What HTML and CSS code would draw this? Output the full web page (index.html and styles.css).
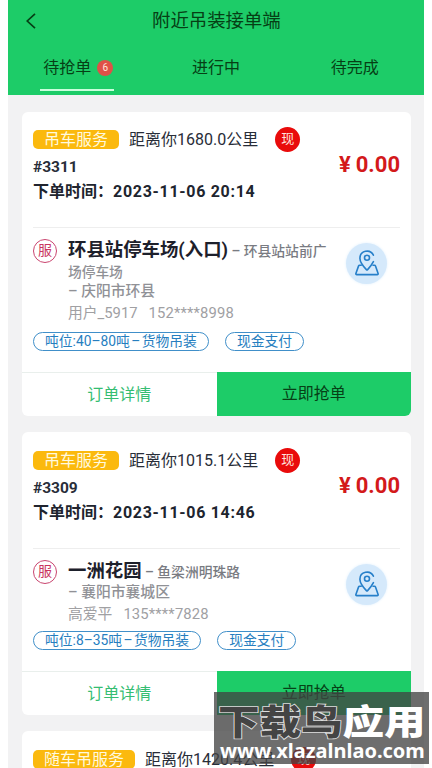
FILE: index.html
```html
<!DOCTYPE html>
<html lang="zh-CN">
<head>
<meta charset="utf-8">
<title>附近吊装接单端</title>
<link rel="stylesheet" href="styles.css">
</head>
<body>
<svg class="defs" aria-hidden="true">
  <symbol id="pin" viewBox="0 0 24 26">
    <path d="M18.4 11.6Q16.5 15.4 12.6 19.6 12 20.2 11.4 19.6C8 16 4.9 12 4.9 8.2A7.1 7.1 0 0 1 18.4 5.2"/>
    <circle cx="12" cy="7.8" r="2.5"/>
    <path d="M6.2 15.3H4.6Q3.8 15.3 3.5 16.1L.9 23.4Q.6 24.6 1.8 24.6H22.2Q23.4 24.6 23.1 23.4L20.5 16.1Q20.2 15.3 19.4 15.3H18"/>
  </symbol>
</svg>
<main class="phone">
  <header class="header">
    <div class="titlebar">
      <svg class="back" viewBox="0 0 10 16"><path d="M9 .8 1.2 8 9 15.2"/></svg>
      <h1>附近吊装接单端</h1>
    </div>
    <nav class="tabs">
      <div class="tab active"><span>待抢单</span><b class="count">6</b></div>
      <div class="tab">进行中</div>
      <div class="tab">待完成</div>
    </nav>
  </header>

  <section class="list">
    <article class="card">
      <div class="top">
        <div class="info">
          <div class="service"><span class="tag">吊车服务</span><span>距离你1680.0公里</span><i class="cash">现</i></div>
          <div class="number">#3311</div>
          <div class="time"><span>下单时间：</span><span class="date">2023-11-06 20:14</span></div>
        </div>
        <div class="price"><span class="yen">¥</span>0.00</div>
      </div>
      <div class="place">
        <i class="serve">服</i>
        <div class="address">
          <div class="name"><strong>环县站停车场(入口)</strong> – 环县站站前广</div>
          <div class="more">场停车场</div>
          <div class="city">– 庆阳市环县</div>
          <div class="user"><span>用户_5917</span><span>152****8998</span></div>
        </div>
        <div class="map"><svg><use href="#pin"/></svg></div>
      </div>
      <div class="pills"><span class="pill">吨位:40–80吨 – 货物吊装</span><span class="pill">现金支付</span></div>
      <div class="actions"><div class="detail">订单详情</div><div class="grab">立即抢单</div></div>
    </article>

    <article class="card">
      <div class="top">
        <div class="info">
          <div class="service"><span class="tag">吊车服务</span><span>距离你1015.1公里</span><i class="cash">现</i></div>
          <div class="number">#3309</div>
          <div class="time"><span>下单时间：</span><span class="date">2023-11-06 14:46</span></div>
        </div>
        <div class="price"><span class="yen">¥</span>0.00</div>
      </div>
      <div class="place short">
        <i class="serve">服</i>
        <div class="address">
          <div class="name"><strong>一洲花园</strong> – 鱼梁洲明珠路</div>
          <div class="city">– 襄阳市襄城区</div>
          <div class="user"><span>高爱平</span><span>135****7828</span></div>
        </div>
        <div class="map"><svg><use href="#pin"/></svg></div>
      </div>
      <div class="pills"><span class="pill">吨位:8–35吨 – 货物吊装</span><span class="pill">现金支付</span></div>
      <div class="actions"><div class="detail">订单详情</div><div class="grab">立即抢单</div></div>
    </article>

    <article class="card">
      <div class="top">
        <div class="info">
          <div class="service"><span class="tag">随车吊服务</span><span>距离你1420.4公里</span><i class="cash">现</i></div>
        </div>
      </div>
    </article>
  </section>
</main>
<aside class="watermark">
  <div class="brand"><span class="dark">下载鸟</span><span>应用</span></div>
  <div class="site">www.xlazalnlao.com</div>
</aside>
</body>
</html>
```
FILE: styles.css
```css
* { box-sizing: border-box; }
html, body { margin: 0; height: 768px; overflow: hidden; }
body {
  background: #fff;
  color: #282d38;
  font: 16px/20px Roboto, "Noto Sans CJK SC", sans-serif;
  white-space: nowrap;
}
i { font-style: normal; }
.defs { position: absolute; width: 0; height: 0; }
.phone { width: 416px; height: 768px; margin-left: 8px; background: #f2f2f3; overflow: hidden; }

.header { height: 95px; background: #1dcc68; color: #063f15; }
.titlebar { display: flex; align-items: center; height: 41px; padding-left: 18px; }
.titlebar h1 { margin: 0 0 0 116px; padding-top: 1px; font-size: 18.4px; line-height: 24px; font-weight: 400; }
.back { width: 10px; height: 16px; fill: none; stroke: #063f15; stroke-width: 1.7; }
.tabs { display: grid; grid-template-columns: repeat(3, 1fr); height: 50px; }
.tab { display: flex; justify-content: center; align-items: center; height: 50px; padding-top: 3px; }
.tab.active { justify-self: center; width: 74px; justify-content: space-between; padding: 5px 1px 0 3px; border-bottom: 2px solid #c9ffdc; }
.count { width: 16px; height: 16px; border-radius: 50%; background: #df5148; color: #ffe4dc; font-size: 10px; line-height: 16px; font-weight: 400; text-align: center; }

.list { padding: 16.5px 13px 0 14px; display: grid; gap: 16px; }
.card { background: #fff; border-radius: 6px; overflow: hidden; }
.card + .card { padding-top: .5px; }
.top { display: flex; justify-content: space-between; height: 116px; margin: 0 11px; padding-top: 15px; border-bottom: 1px solid #eee; }
.service { display: flex; align-items: center; height: 26px; }
.tag { height: 19px; padding: 0 11px; border-radius: 5px; background: #fbb90e; color: #fff9df; line-height: 19px; margin-right: 10px; }
.cash { width: 25px; height: 25px; margin-left: 17px; border-radius: 50%; background: #e90b0b; color: #ffe3df; font-size: 13px; line-height: 24px; text-align: center; }
.number { height: 24px; font-size: 15.5px; line-height: 29px; font-weight: 700; }
.time { display: flex; height: 24px; line-height: 30px; font-weight: 700; color: #20242e; }
.date { letter-spacing: .7px; }
.price { margin-top: 25px; color: #d3191b; font-size: 22px; line-height: 26px; font-weight: 700; }
.yen { margin-right: 5px; font-size: 22px; }

.place { display: flex; height: 104.5px; padding: 11px 24px 0 11px; }
.place.short { height: 82.5px; }
.serve { flex: none; width: 24px; height: 24px; border: 1px solid #c9456f; border-radius: 50%; color: #c9345f; font-size: 14px; line-height: 21px; text-align: center; }
.address { flex: 1; padding-left: 11px; color: #909196; }
.name { height: 24px; line-height: 22px; font-size: 13.8px; font-weight: 500; color: #797b82; }
.name strong { font-size: 18.4px; color: #1d202b; }
.more { height: 19px; font-size: 13.7px; line-height: 19px; font-weight: 500; }
.city { height: 19px; font-size: 14.8px; line-height: 18px; font-weight: 500; }
.short .city { line-height: 16px; }
.user { display: flex; gap: 11px; height: 24px; font-size: 14.8px; line-height: 24px; color: #a0a0a3; }
.short .user { line-height: 22px; }
.user span + span { letter-spacing: .15px; }
.map { flex: none; display: grid; place-items: center; width: 41px; height: 41px; margin-top: 4px; border-radius: 50%; background: #d5e9fb; box-shadow: 0 0 3px #e0f0fd; }
.map svg { width: 24px; height: 26px; margin-top: -1px; fill: none; stroke: #267fc9; stroke-width: 1.6; stroke-linejoin: round; stroke-linecap: round; }

.pills { display: flex; gap: 16px; height: 40px; padding: 0 11px; }
.pill { height: 19px; padding: 0 11px; border: 1px solid #408fc9; border-radius: 10px; color: #267ebf; font-size: 13.8px; line-height: 17px; word-spacing: -2px; }
.actions { display: grid; grid-template-columns: 1fr 1fr; height: 44px; line-height: 43px; text-align: center; }
.detail { border-top: 1px solid #e9efec; color: #35bd72; }
.grab { background: #1dcc68; color: #064016; }

.watermark { position: absolute; left: 214px; top: 692px; width: 215px; height: 72px; background: rgba(66, 66, 66, .77); color: #fff; }
.brand { display: flex; height: 47px; padding-left: 4px; font: 900 41.5px/56px "Noto Sans CJK SC", sans-serif; transform: scaleY(.86); }
.dark { color: #444; -webkit-text-stroke: 2px #ddd; paint-order: stroke fill; }
.site { padding-left: 6px; font: 700 20px/24px "Noto Sans", sans-serif; }
```
